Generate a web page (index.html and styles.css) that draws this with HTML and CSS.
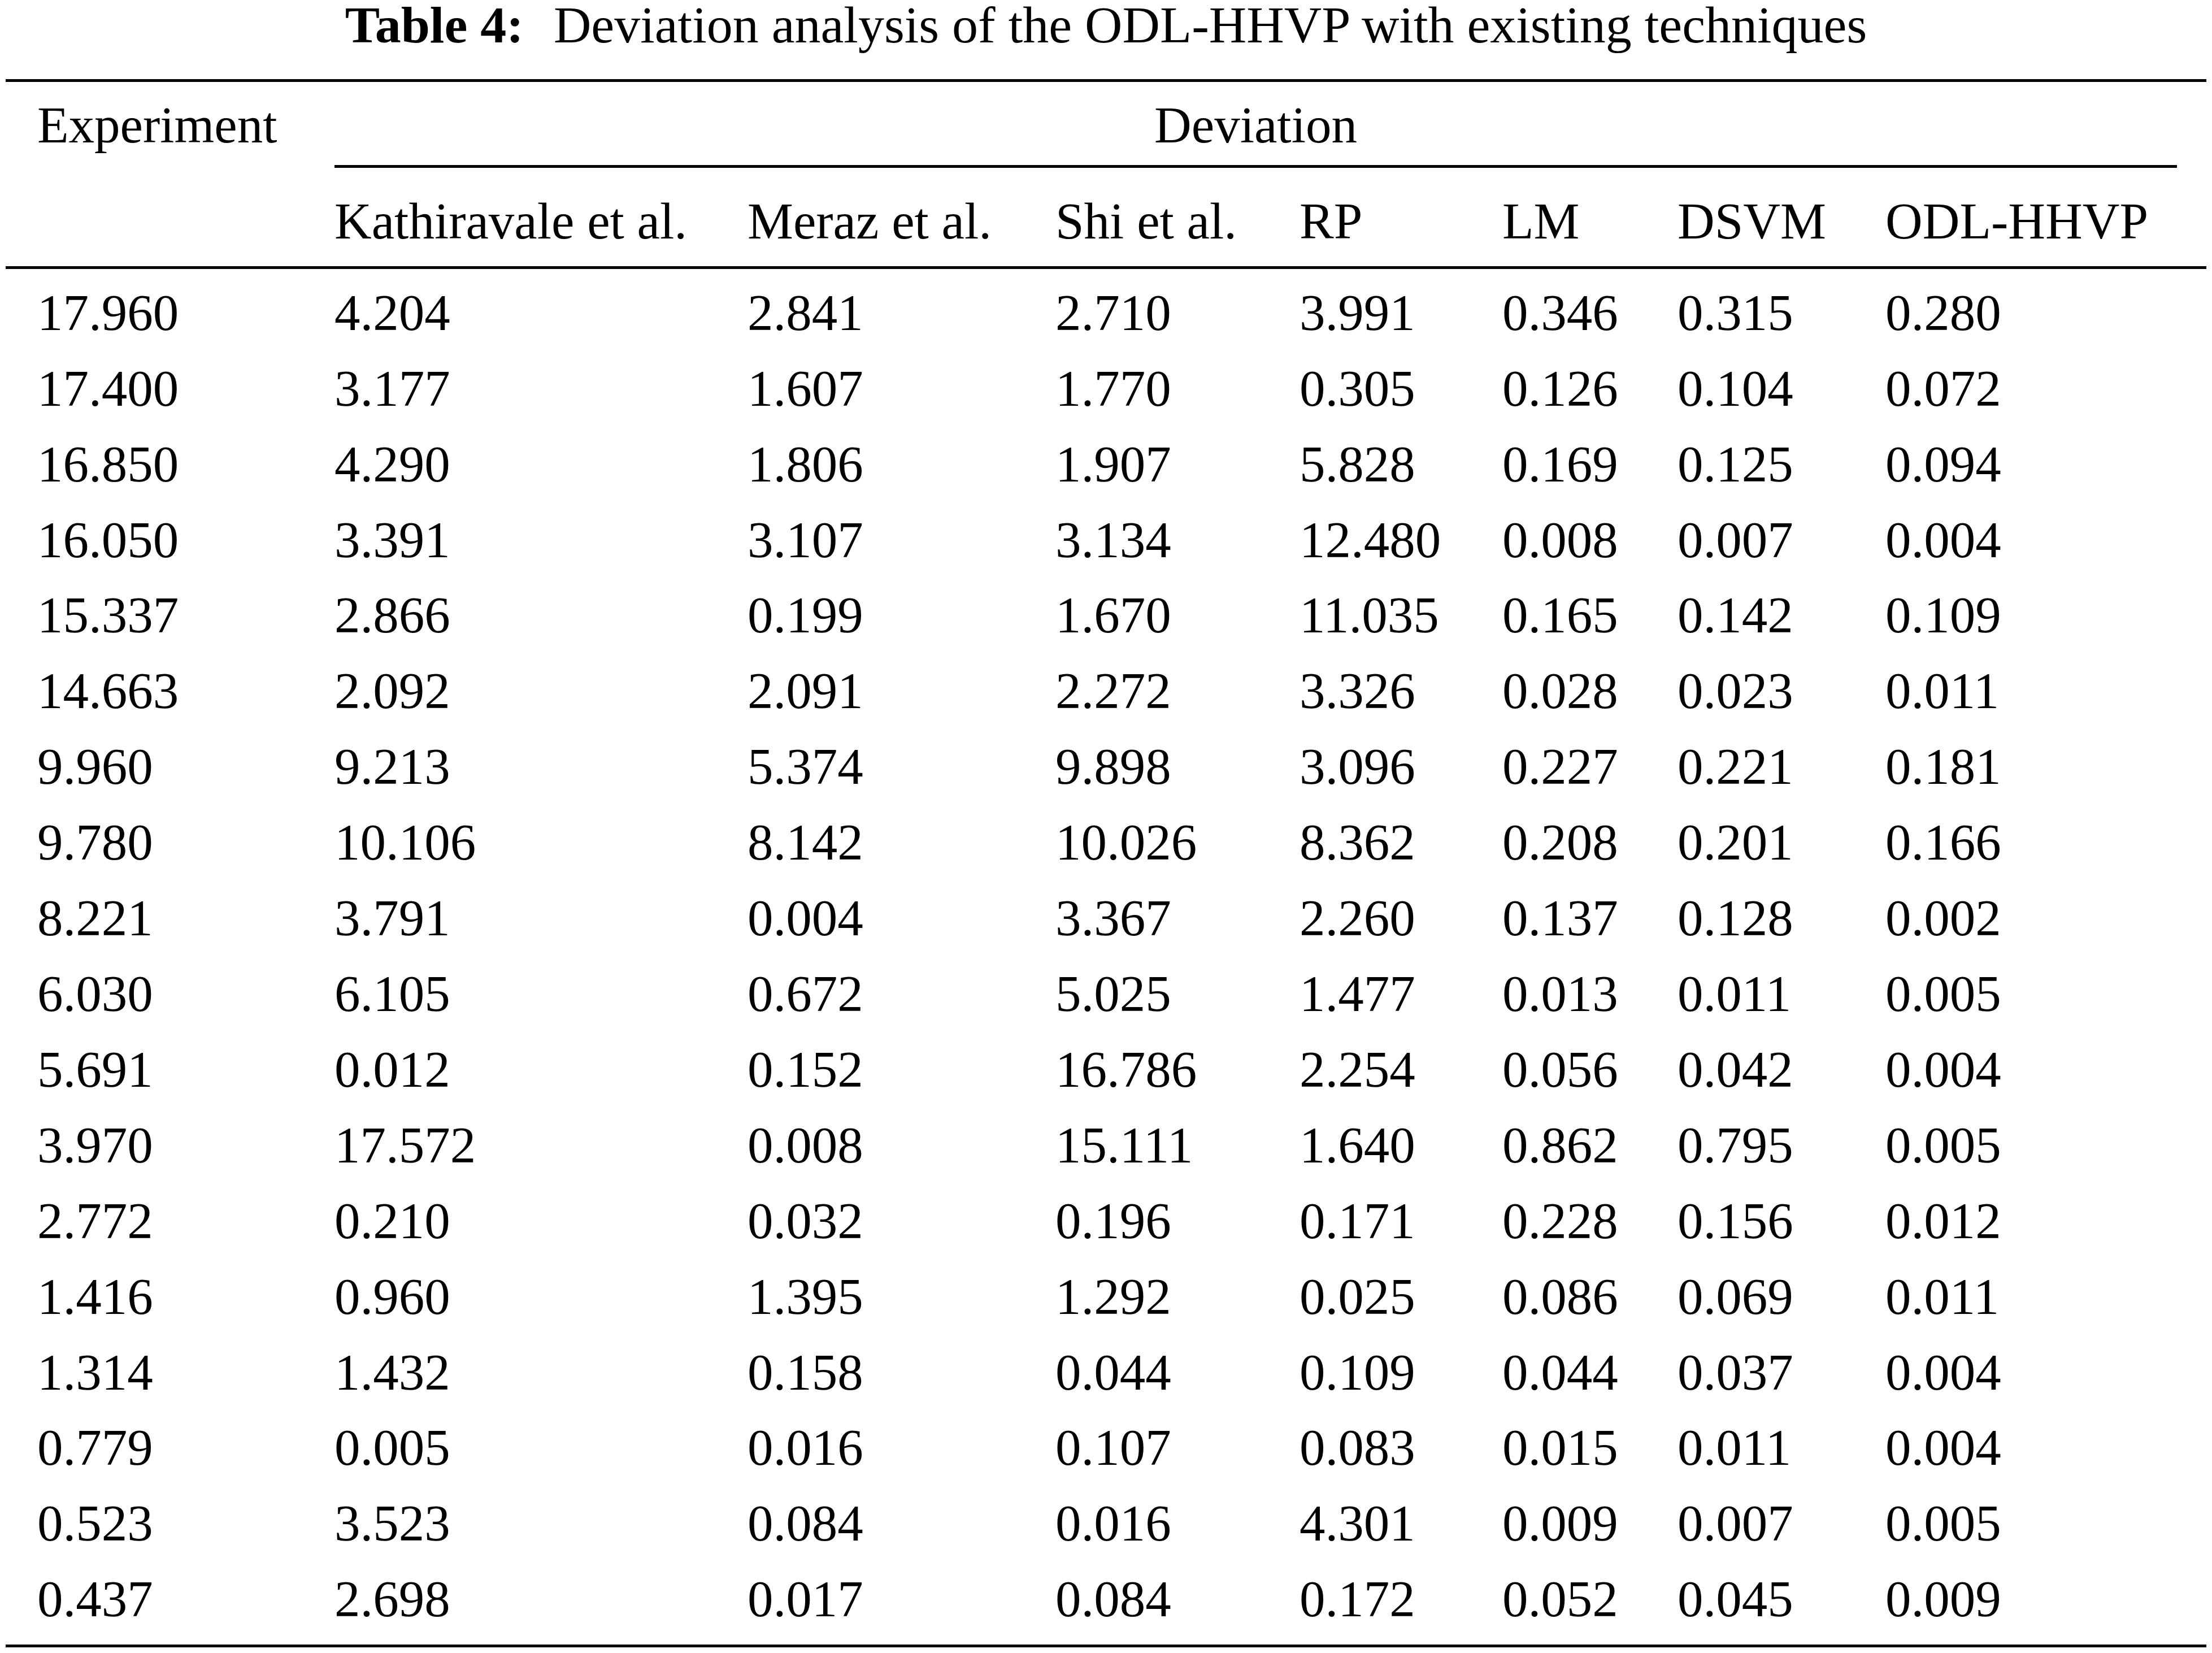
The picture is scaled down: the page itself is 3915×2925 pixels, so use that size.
FILE: index.html
```html
<!DOCTYPE html>
<html lang="en">
<head>
<meta charset="utf-8">
<title>Table 4: Deviation analysis of the ODL-HHVP with existing techniques</title>
<link rel="stylesheet" href="styles.css">
</head>
<body>
<div class="page">
  <div class="caption"><span class="caption-label">Table 4:</span> Deviation analysis of the ODL-HHVP with existing techniques</div>
  <table class="data-table">
    <colgroup>
      <col class="c-exp">
      <col class="c-kath">
      <col class="c-meraz">
      <col class="c-shi">
      <col class="c-rp">
      <col class="c-lm">
      <col class="c-dsvm">
      <col class="c-odl">
    </colgroup>
    <thead>
      <tr class="head-top">
        <th class="first" rowspan="2">Experiment</th>
        <th class="dev-cell" colspan="7"><div class="dev-label">Deviation</div></th>
      </tr>
      <tr class="head-sub">
        <th>Kathiravale et al.</th>
        <th>Meraz et al.</th>
        <th>Shi et al.</th>
        <th>RP</th>
        <th>LM</th>
        <th>DSVM</th>
        <th>ODL-HHVP</th>
      </tr>
    </thead>
    <tbody>
      <tr><td class="first">17.960</td><td>4.204</td><td>2.841</td><td>2.710</td><td>3.991</td><td>0.346</td><td>0.315</td><td>0.280</td></tr>
      <tr><td class="first">17.400</td><td>3.177</td><td>1.607</td><td>1.770</td><td>0.305</td><td>0.126</td><td>0.104</td><td>0.072</td></tr>
      <tr><td class="first">16.850</td><td>4.290</td><td>1.806</td><td>1.907</td><td>5.828</td><td>0.169</td><td>0.125</td><td>0.094</td></tr>
      <tr><td class="first">16.050</td><td>3.391</td><td>3.107</td><td>3.134</td><td>12.480</td><td>0.008</td><td>0.007</td><td>0.004</td></tr>
      <tr><td class="first">15.337</td><td>2.866</td><td>0.199</td><td>1.670</td><td>11.035</td><td>0.165</td><td>0.142</td><td>0.109</td></tr>
      <tr><td class="first">14.663</td><td>2.092</td><td>2.091</td><td>2.272</td><td>3.326</td><td>0.028</td><td>0.023</td><td>0.011</td></tr>
      <tr><td class="first">9.960</td><td>9.213</td><td>5.374</td><td>9.898</td><td>3.096</td><td>0.227</td><td>0.221</td><td>0.181</td></tr>
      <tr><td class="first">9.780</td><td>10.106</td><td>8.142</td><td>10.026</td><td>8.362</td><td>0.208</td><td>0.201</td><td>0.166</td></tr>
      <tr><td class="first">8.221</td><td>3.791</td><td>0.004</td><td>3.367</td><td>2.260</td><td>0.137</td><td>0.128</td><td>0.002</td></tr>
      <tr><td class="first">6.030</td><td>6.105</td><td>0.672</td><td>5.025</td><td>1.477</td><td>0.013</td><td>0.011</td><td>0.005</td></tr>
      <tr><td class="first">5.691</td><td>0.012</td><td>0.152</td><td>16.786</td><td>2.254</td><td>0.056</td><td>0.042</td><td>0.004</td></tr>
      <tr><td class="first">3.970</td><td>17.572</td><td>0.008</td><td>15.111</td><td>1.640</td><td>0.862</td><td>0.795</td><td>0.005</td></tr>
      <tr><td class="first">2.772</td><td>0.210</td><td>0.032</td><td>0.196</td><td>0.171</td><td>0.228</td><td>0.156</td><td>0.012</td></tr>
      <tr><td class="first">1.416</td><td>0.960</td><td>1.395</td><td>1.292</td><td>0.025</td><td>0.086</td><td>0.069</td><td>0.011</td></tr>
      <tr><td class="first">1.314</td><td>1.432</td><td>0.158</td><td>0.044</td><td>0.109</td><td>0.044</td><td>0.037</td><td>0.004</td></tr>
      <tr><td class="first">0.779</td><td>0.005</td><td>0.016</td><td>0.107</td><td>0.083</td><td>0.015</td><td>0.011</td><td>0.004</td></tr>
      <tr><td class="first">0.523</td><td>3.523</td><td>0.084</td><td>0.016</td><td>4.301</td><td>0.009</td><td>0.007</td><td>0.005</td></tr>
      <tr><td class="first">0.437</td><td>2.698</td><td>0.017</td><td>0.084</td><td>0.172</td><td>0.052</td><td>0.045</td><td>0.009</td></tr>
    </tbody>
  </table>
</div>
</body>
</html>
```
FILE: styles.css
```css
html, body {
  margin: 0;
  padding: 0;
  background: #ffffff;
}

body {
  font-family: "Liberation Serif", "Times New Roman", serif;
  font-size: 91px;
  color: #000000;
}

.page {
  width: 3915px;
}

.caption {
  text-align: center;
  font-size: 92px;
  line-height: 88px;
  height: 88px;
  white-space: nowrap;
}

.caption-label {
  font-weight: bold;
  margin-right: 30px;
}

.data-table {
  margin: 52px 0 0 10px;
  width: 3895px;
  table-layout: fixed;
  border-collapse: separate;
  border-spacing: 0;
  line-height: 133.9px;
}

.c-exp { width: 582px; }
.c-kath { width: 731px; }
.c-meraz { width: 545px; }
.c-shi { width: 432px; }
.c-rp { width: 359px; }
.c-lm { width: 310px; }
.c-dsvm { width: 368px; }
.c-odl { width: 568px; }

.data-table th,
.data-table td {
  font-weight: normal;
  text-align: left;
  vertical-align: top;
  padding: 0;
  white-space: nowrap;
}

.data-table .first {
  padding-left: 56px;
}

.head-top th {
  border-top: 5px solid #000;
  padding-top: 10px;
}

.dev-label {
  text-align: center;
  margin-right: 52px;
  padding-bottom: 3px;
  border-bottom: 5px solid #000;
}

.head-sub th {
  padding-top: 28px;
  padding-bottom: 12px;
  border-bottom: 5px solid #000;
}

.data-table th[rowspan] {
  border-bottom: 5px solid #000;
}

tbody tr:first-child td {
  padding-top: 11px;
}

tbody tr:last-child td {
  padding-bottom: 13px;
  border-bottom: 5px solid #000;
}
```
